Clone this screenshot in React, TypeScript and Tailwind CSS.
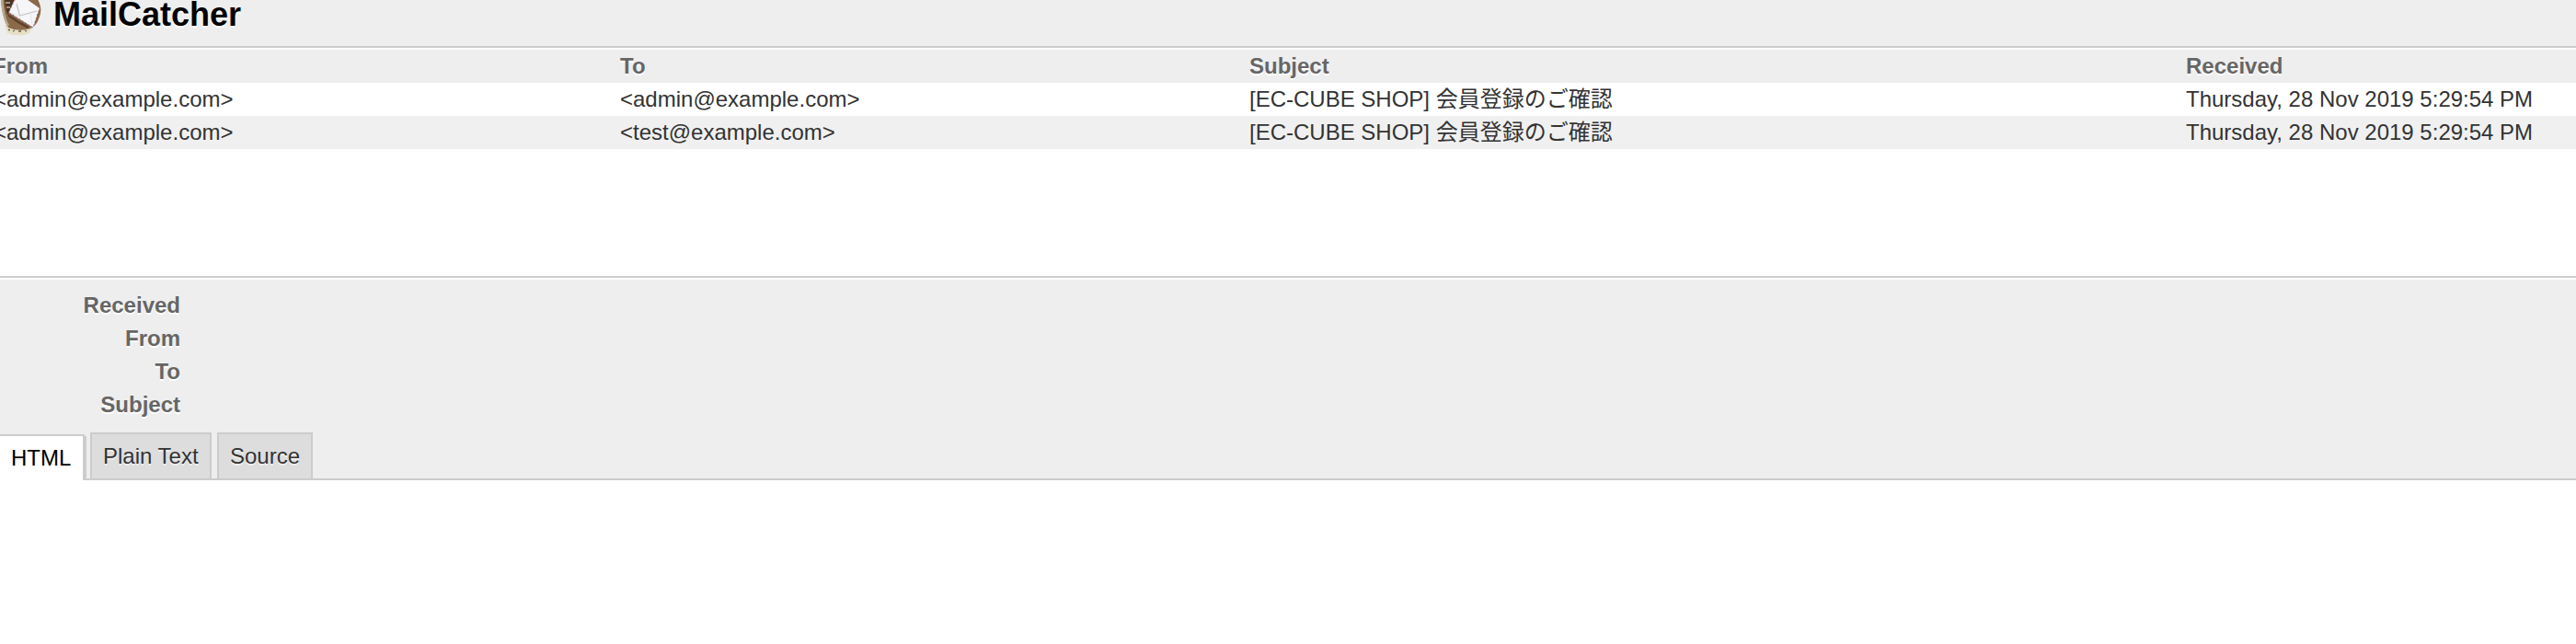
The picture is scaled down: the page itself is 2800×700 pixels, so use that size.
import React from "react";

const columns = "grid grid-cols-[674px_684px_1018px_1fr] h-9";
const embossed = "[text-shadow:0_2px_0_#ffffff]";

const messages = [
  { from: "<admin@example.com>", to: "<admin@example.com>", subject: "[EC-CUBE SHOP] 会員登録のご確認", received: "Thursday, 28 Nov 2019 5:29:54 PM" },
  { from: "<admin@example.com>", to: "<test@example.com>", subject: "[EC-CUBE SHOP] 会員登録のご確認", received: "Thursday, 28 Nov 2019 5:29:54 PM" },
];

function Logo() {
  return (
    <svg className="block h-10 w-[58px] shrink-0" viewBox="0 0 58 40" aria-hidden="true">
      <defs>
        <filter id="soft" x="-10%" y="-10%" width="120%" height="120%">
          <feGaussianBlur stdDeviation="0.7" />
        </filter>
      </defs>
      <g filter="url(#soft)">
        <path d="M5 27 L8 36 Q20 41 32 36 L36 28Z" fill="#e6dfc6" />
        <path d="M1 -4 H39 Q47 8 43 18 Q40 28 33 31 Q20 35 9 30 Q2 20 1 -4Z" fill="#8a6a4a" />
        <path d="M2 -2 Q3 18 9 28" fill="none" stroke="#b9a88c" strokeWidth="2.5" />
        <path d="M5 -2 H17 L12 9 L9 15 L12 21 Q5 14 5 -2Z" fill="#4a3426" />
        <path d="M6 3 H11 M7 8 H11" stroke="#a99179" strokeWidth="2" />
        <path d="M10 17 Q20 25 31 30" fill="none" stroke="#5d4330" strokeWidth="2.5" />
        <path d="M9 32.5 h2 M14 34 l2 -1 M20 34 h3 M27 33 l2 1" stroke="#6b5940" strokeWidth="1.3" />
        <path d="M17 -3 L26 -3 L43 9 L36 30 L9.500 13.500Z" fill="#f6f6f8" />
        <path d="M18 4 L21.500 17 L40 12" fill="none" stroke="#c3c3c8" strokeWidth="1.2" />
        <path d="M22 18 L12 14 M33 15 L35 27" fill="none" stroke="#e6e6ea" strokeWidth="1" />
        <path d="M16 0 L9.500 13.500 L36 30 L43 9" fill="none" stroke="#c65b60" strokeWidth="1" strokeDasharray="2 6" />
        <path d="M16 0 L9.500 13.500 L36 30 L43 9" fill="none" stroke="#56708e" strokeWidth="1" strokeDasharray="2 6" strokeDashoffset="-4" />
      </g>
    </svg>
  );
}

export default function App() {
  return (
    <div className="flex h-[700px] w-full flex-col overflow-hidden bg-white font-['Liberation_Sans','Noto_Sans_CJK_JP',sans-serif] text-2xl leading-9 text-[#333333]">
      <header className="flex h-[52px] shrink-0 items-start border-b-2 border-[#cccccc] bg-[#eeeeee]">
        <Logo />
        <h1 className={`text-[36px] leading-8 font-bold text-black ${embossed}`}>MailCatcher</h1>
      </header>

      <section className="flex h-[248px] shrink-0 flex-col pt-0.5 whitespace-nowrap">
        <div className={`${columns} bg-[#eeeeee] font-bold text-[#666666] ${embossed}`}>
          <span className="-ml-2">From</span>
          <span>To</span>
          <span>Subject</span>
          <span>Received</span>
        </div>
        {messages.map((m, i) => (
          <div key={i} className={`${columns} even:bg-white odd:bg-[#f0f0f0]`}>
            <span className="-ml-[7px]">{m.from}</span>
            <span>{m.to}</span>
            <span>{m.subject}</span>
            <span>{m.received}</span>
          </div>
        ))}
      </section>

      <section className="flex h-[222px] shrink-0 flex-col border-t-2 border-b-2 border-[#cccccc]">
        <div className="flex grow flex-col justify-between border-t-2 border-white bg-[#eeeeee] pt-2.5">
          <dl className={`w-[196px] text-right font-bold text-[#666666] ${embossed}`}>
            <dt>Received</dt>
            <dt>From</dt>
            <dt>To</dt>
            <dt>Subject</dt>
          </dl>
          <nav className="flex h-[50px] items-start">
            <span className="z-10 mt-0.5 mr-1.5 h-[50px] w-[92px] border-t-2 border-r-2 border-[#cccccc] bg-white pt-1.5 pl-3 text-black shadow-[2px_2px_0_#cccccc] [clip-path:inset(0_-2px_0_0)] [text-shadow:0_2px_0_#eeeeee]">HTML</span>
            <span className="mr-1.5 h-[50px] w-[132px] border-2 border-b-0 border-[#cccccc] bg-[#dddddd] pt-1.5 pl-3 whitespace-nowrap [text-shadow:0_2px_0_#eeeeee]">Plain Text</span>
            <span className="h-[50px] w-[104px] border-2 border-b-0 border-[#cccccc] bg-[#dddddd] pt-1.5 pl-3 [text-shadow:0_2px_0_#eeeeee]">Source</span>
          </nav>
        </div>
      </section>
    </div>
  );
}
